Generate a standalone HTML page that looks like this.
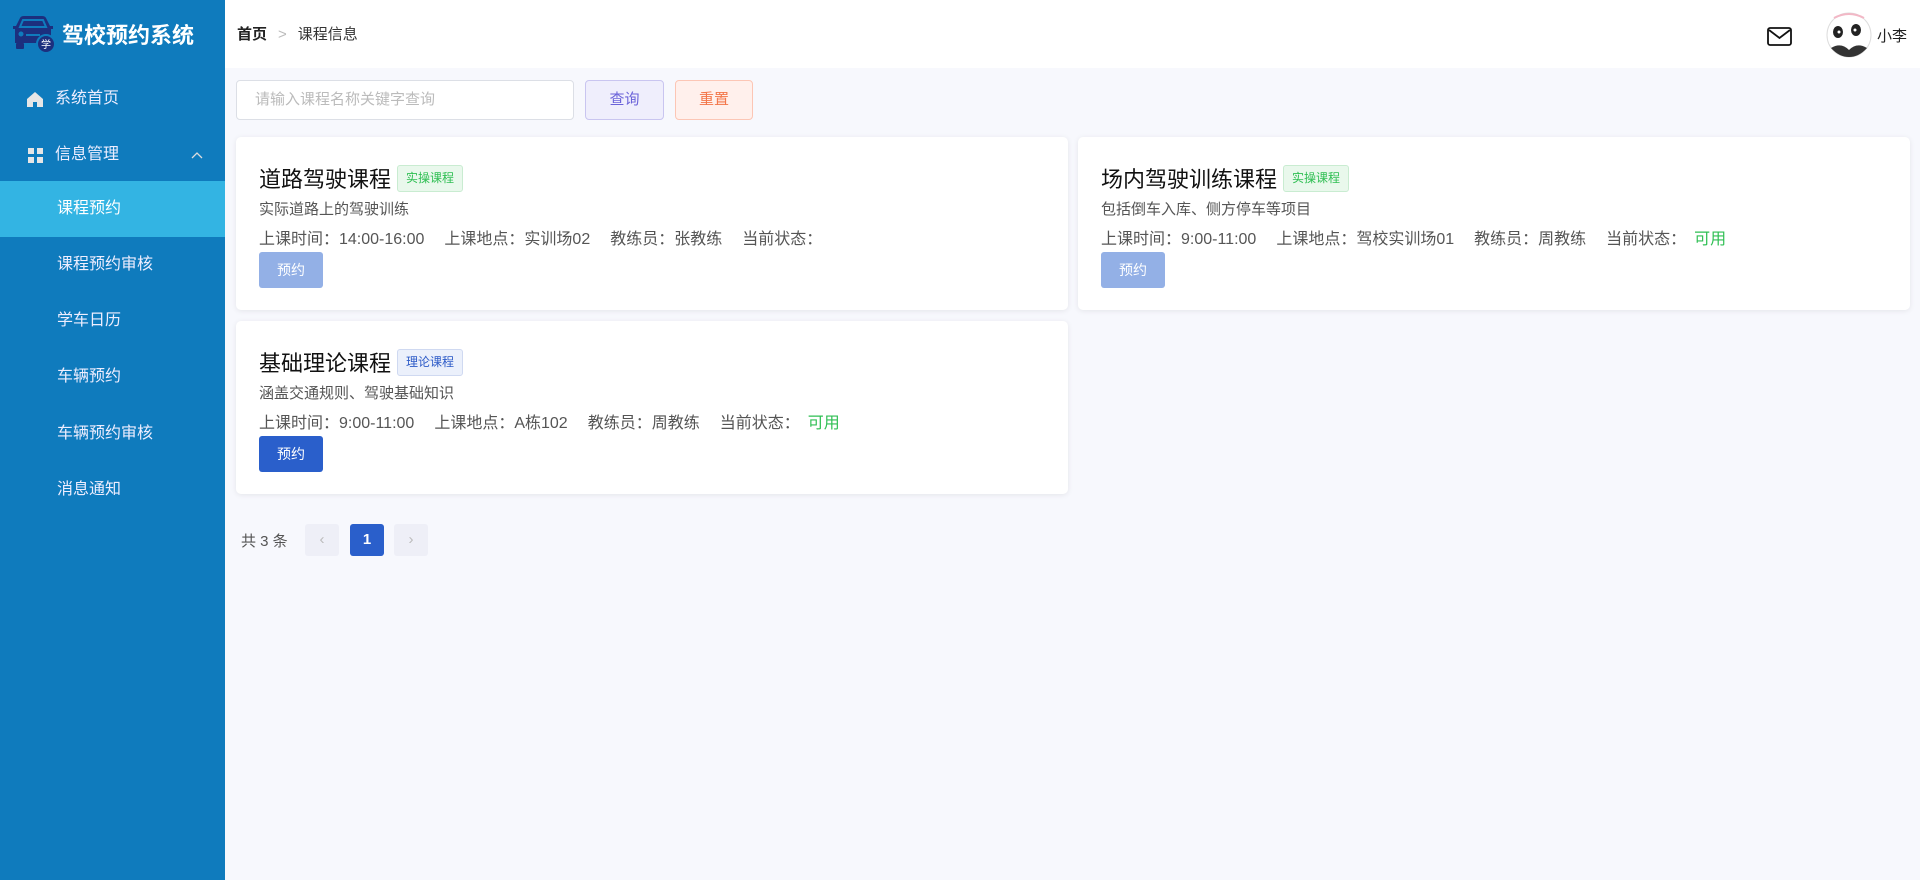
<!DOCTYPE html>
<html><head><meta charset="utf-8"><style>
*{margin:0;padding:0;box-sizing:border-box}
body{width:1920px;height:880px;overflow:hidden;background:#f7f8fd;font-family:"Liberation Sans","Noto Sans CJK SC",sans-serif;position:relative}
.side{position:absolute;left:0;top:0;width:225px;height:880px;background:#0f7bbd;color:#fff}
.logo{position:absolute;left:11px;top:14px;display:flex;align-items:center}
.logo span{font-size:22px;font-weight:bold;margin-left:6px;letter-spacing:0}
.mi{position:absolute;left:0;width:225px;height:56px;line-height:56px;font-size:16px;color:#eef}
.mi.sub{padding-left:57px}
.mi.act{background:#33b4e3;color:#fff}
.header{position:absolute;left:225px;top:0;right:0;height:68px;background:#fff}
.crumb{position:absolute;left:12px;top:23px;font-size:15px;color:#333}
.crumb b{font-weight:bold;color:#222}
.crumb i{font-style:normal;color:#bbb;margin:0 11px}
.inp{position:absolute;left:236px;top:80px;width:338px;height:40px;background:#fff;border:1px solid #dcdfe6;border-radius:4px;font-size:15px;color:#bbb;line-height:38px;padding-left:18px}
.btn{position:absolute;top:80px;height:40px;border-radius:4px;font-size:15px;line-height:38px;text-align:center}
.card{position:absolute;background:#fff;border-radius:5px;box-shadow:0 1px 6px rgba(0,0,0,.08);width:832px;height:173px}
.t{position:absolute;left:23px;top:25px;font-size:22px;color:#111;display:flex;align-items:center}
.tag{font-size:12px;border-radius:3px;padding:0 8px;height:27px;line-height:25px;margin-left:6px;border:1px solid}
.g{color:#2fbf53;background:#e9f8ec;border-color:#c9ecd1}
.bl{color:#2c5ac7;background:#ebf0fb;border-color:#cfd9f1}
.d{position:absolute;left:23px;top:61px;font-size:15px;color:#555}
.info{position:absolute;left:23px;top:88px;font-size:16px;color:#555;white-space:nowrap}
.info span{margin-right:20px}
.ok{color:#2fbf53}
.bk{position:absolute;left:23px;top:115px;width:64px;height:36px;border-radius:3px;color:#fff;font-size:14px;text-align:center;line-height:36px;background:#93b0e6}
.bk.on{background:#2a5fcb}
.pg{position:absolute;top:524px;width:34px;height:32px;border-radius:3px;background:#eeeff7;color:#bbb;text-align:center;line-height:32px;font-size:15px}
</style></head><body>
<div class="side">
 <div class="logo">
  <svg width="45" height="40" viewBox="0 0 45 40"><path d="M9 4 Q10 2 13 2 H31 Q34 2 35 4 L39 12 H42 V15 H40 V29 H4 V15 H2 V12 H5Z" fill="#1c2f7e"/><path d="M12 6 H32 L35 13 H9Z" fill="none" stroke="#0f7bbd" stroke-width="2"/><circle cx="10" cy="20" r="2.5" fill="#0f7bbd"/><rect x="15" y="20" width="14" height="2" fill="#0f7bbd"/><rect x="5" y="29" width="8" height="6" rx="1" fill="#1c2f7e"/><circle cx="35" cy="30" r="9" fill="#1c2f7e" stroke="#0f7bbd" stroke-width="2"/><text x="35" y="34" font-size="10" fill="#fff" text-anchor="middle" font-family="Noto Sans CJK SC">学</text></svg>
  <span>驾校预约系统</span></div>
 <div class="mi" style="top:71px;padding-left:55px"><svg style="position:absolute;left:27px;top:21px" width="16" height="15" viewBox="0 0 16 15"><path d="M8 0 L16 7 V15 H10 V10 H6 V15 H0 V7Z" fill="#e6e6e6"/></svg>系统首页</div>
 <div class="mi" style="top:127px;padding-left:55px"><svg style="position:absolute;left:28px;top:21px" width="15" height="15"><rect width="6" height="6" fill="#e6e6e6"/><rect x="9" width="6" height="6" fill="#e6e6e6"/><rect y="9" width="6" height="6" fill="#e6e6e6"/><rect x="9" y="9" width="6" height="6" fill="#e6e6e6"/></svg>信息管理<svg style="position:absolute;left:191px;top:25px" width="12" height="7"><path d="M1 6 L6 1 L11 6" stroke="#ddd" fill="none" stroke-width="1.3"/></svg></div>
 <div class="mi sub act" style="top:181px">课程预约</div>
 <div class="mi sub" style="top:237px">课程预约审核</div>
 <div class="mi sub" style="top:293px">学车日历</div>
 <div class="mi sub" style="top:349px">车辆预约</div>
 <div class="mi sub" style="top:406px">车辆预约审核</div>
 <div class="mi sub" style="top:462px">消息通知</div>
</div>
<div class="header">
 <div class="crumb"><b>首页</b><i>&gt;</i>课程信息</div>
 <svg style="position:absolute;left:1542px;top:27px" width="25" height="19"><rect x="1" y="1" width="23" height="17" rx="2" fill="none" stroke="#111" stroke-width="1.8"/><path d="M2 3 L12.5 11 L23 3" fill="none" stroke="#111" stroke-width="1.8"/></svg>
 <svg style="position:absolute;left:1601px;top:12px" width="46" height="46" viewBox="0 0 46 46"><circle cx="23" cy="23" r="22" fill="#fff" stroke="#ddd"/><path d="M8 6 Q23 -2 38 6" stroke="#f2b8c6" stroke-width="2" fill="none"/><ellipse cx="12" cy="20" rx="5" ry="6" fill="#222"/><ellipse cx="30" cy="18" rx="5" ry="6" fill="#222"/><circle cx="13" cy="20" r="1.5" fill="#fff"/><circle cx="29" cy="18" r="1.5" fill="#fff"/><path d="M5 36 Q15 30 23 38 Q31 30 41 36 Q33 45 23 45 Q13 45 5 36Z" fill="#333"/></svg>
 <div style="position:absolute;left:1652px;top:25px;font-size:15px;color:#222">小李</div>
</div>
<div class="inp">请输入课程名称关键字查询</div>
<div class="btn" style="left:585px;width:79px;background:#efeefc;border:1px solid #c9c5f0;color:#6b63d9">查询</div>
<div class="btn" style="left:675px;width:78px;background:#fff0ec;border:1px solid #fcc6b5;color:#f37649">重置</div>

<div class="card" style="left:236px;top:137px">
 <div class="t">道路驾驶课程<span class="tag g">实操课程</span></div>
 <div class="d">实际道路上的驾驶训练</div>
 <div class="info"><span>上课时间：14:00-16:00</span><span>上课地点：实训场02</span><span>教练员：张教练</span><span>当前状态：</span></div>
 <div class="bk">预约</div>
</div>
<div class="card" style="left:1078px;top:137px">
 <div class="t">场内驾驶训练课程<span class="tag g">实操课程</span></div>
 <div class="d">包括倒车入库、侧方停车等项目</div>
 <div class="info"><span>上课时间：9:00-11:00</span><span>上课地点：驾校实训场01</span><span>教练员：周教练</span><span>当前状态：<b class="ok" style="font-weight:normal;margin-left:8px">可用</b></span></div>
 <div class="bk">预约</div>
</div>
<div class="card" style="left:236px;top:321px">
 <div class="t">基础理论课程<span class="tag bl">理论课程</span></div>
 <div class="d">涵盖交通规则、驾驶基础知识</div>
 <div class="info"><span>上课时间：9:00-11:00</span><span>上课地点：A栋102</span><span>教练员：周教练</span><span>当前状态：<b class="ok" style="font-weight:normal;margin-left:8px">可用</b></span></div>
 <div class="bk on">预约</div>
</div>

<div style="position:absolute;left:241px;top:530px;font-size:15px;color:#555">共 3 条</div>
<div class="pg" style="left:305px">&lsaquo;</div>
<div class="pg" style="left:350px;background:#2a5fcb;color:#fff;font-weight:bold">1</div>
<div class="pg" style="left:394px">&rsaquo;</div>
</body></html>
